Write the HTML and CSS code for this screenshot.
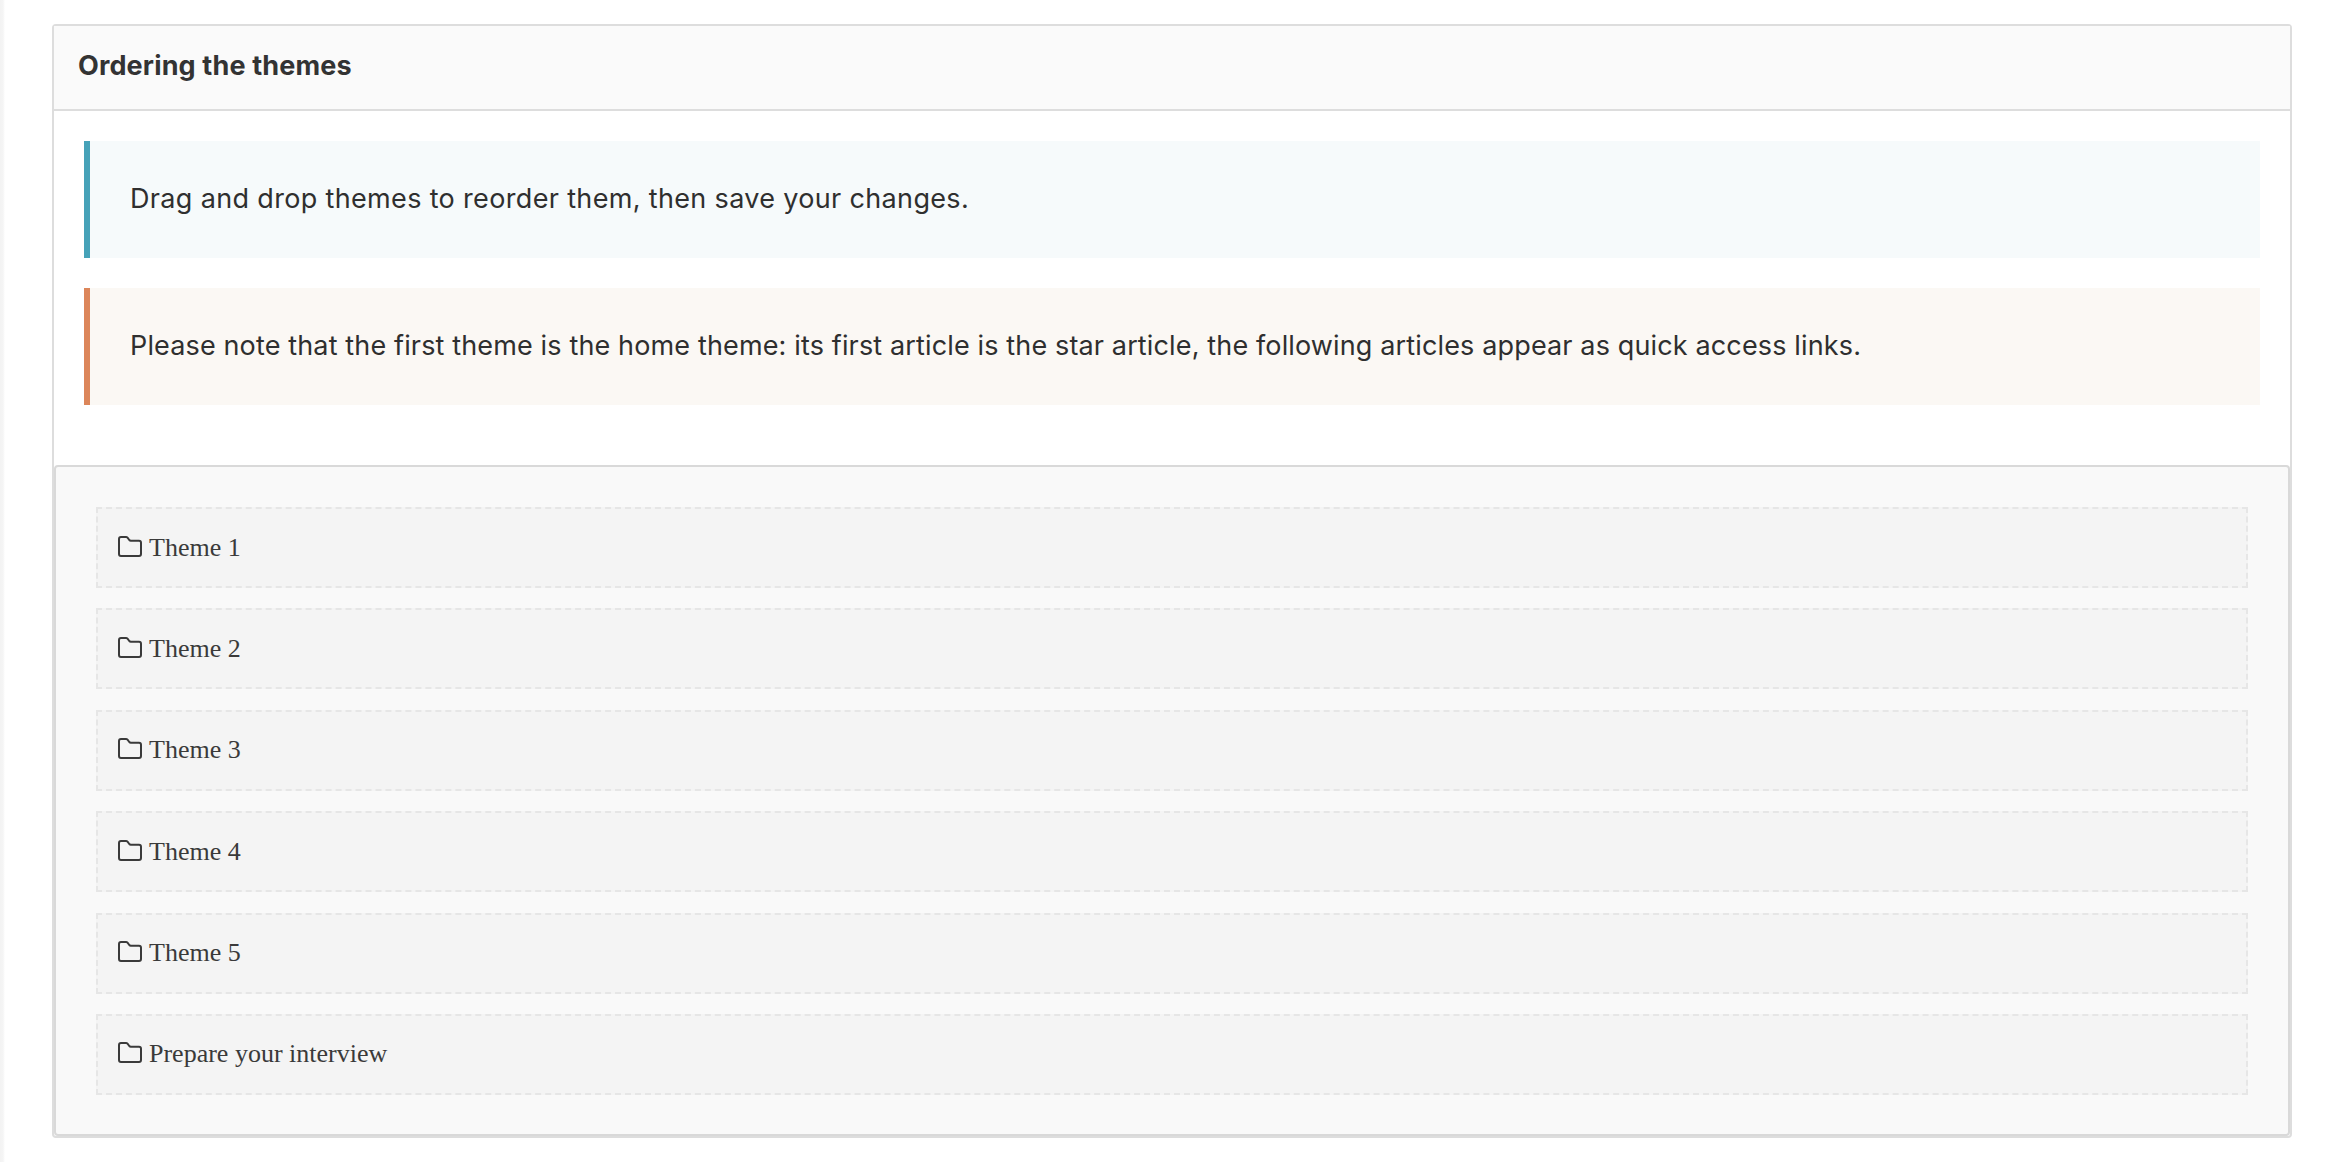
FILE: index.html
```html
<!DOCTYPE html>
<html lang="en">
<head>
<meta charset="utf-8">
<title>Ordering the themes</title>
<link rel="stylesheet" href="styles.css">
</head>
<body>
<svg width="0" height="0" class="defs" aria-hidden="true"><symbol id="folder" viewBox="0 0 24 21"><path d="M1 3a2 2 0 0 1 2-2h5a2 2 0 0 1 1.5.7l1.8 2.3a2 2 0 0 0 1.5.7H21a2 2 0 0 1 2 2V18a2 2 0 0 1-2 2H3a2 2 0 0 1-2-2Z" fill="none" stroke="currentColor" stroke-width="2" stroke-linejoin="round"/></symbol></svg>
<div class="rail"></div>
<main class="main">
  <section class="card">
    <header class="card-head"><h1 class="title">Ordering the themes</h1></header>
    <div class="notes">
      <p class="note note-info">Drag and drop themes to reorder them, then save your changes.</p>
      <p class="note note-warn">Please note that the first theme is the home theme: its first article is the star article, the following articles appear as quick access links.</p>
    </div>
    <ul class="well">
      <li class="item"><svg class="ico"><use href="#folder"/></svg><span>Theme 1</span></li>
      <li class="item"><svg class="ico"><use href="#folder"/></svg><span>Theme 2</span></li>
      <li class="item"><svg class="ico"><use href="#folder"/></svg><span>Theme 3</span></li>
      <li class="item"><svg class="ico"><use href="#folder"/></svg><span>Theme 4</span></li>
      <li class="item"><svg class="ico"><use href="#folder"/></svg><span>Theme 5</span></li>
      <li class="item"><svg class="ico"><use href="#folder"/></svg><span>Prepare your interview</span></li>
    </ul>
  </section>
</main>
</body>
</html>
```
FILE: styles.css
```css
* { box-sizing: border-box; }
html, body { margin: 0; height: 1162px; overflow: hidden; background: #fff; }
body { display: flex; font-family: "Inter", "Liberation Sans", sans-serif; color: #333; }
.defs { position: absolute; }
.rail { width: 5px; flex: none; background: linear-gradient(90deg, #f3f3f3 0, #f5f5f5 60%, #fff 100%); }
.main { flex: none; padding: 24px 0 0 47px; }
.card { width: 2240px; border: 2px solid #ddd; border-radius: 4px; background: #fff; }
.card-head { height: 85px; display: flex; align-items: center; padding: 0 24px 4px; background: #fafafa; border-bottom: 2px solid #ddd; }
.title { margin: 0; font-size: 27px; font-weight: 700; color: #333; letter-spacing: 0.15px; }
.notes { display: flex; flex-direction: column; gap: 30px; padding: 30px 30px 60px 30px; }
.note { margin: 0; height: 117px; display: flex; align-items: center; padding: 0 0 2px 40px; border-left: 6px solid; font-size: 27px; color: #2f2f2f; }
.note-info { background: #f6fafb; border-color: #46a2b8; letter-spacing: 0.34px; }
.note-warn { background: #fbf8f4; border-color: #dc865a; letter-spacing: 0.14px; }
.well { list-style: none; margin: 0; padding: 40px 40px 39px; display: flex; flex-direction: column; gap: 20.4px; background: #f9f9f9; border: 2px solid #d9d9d9; border-radius: 4px; }
.item { height: 81px; display: flex; align-items: center; gap: 7px; padding-left: 20px; background: #f4f4f4; border: 2px dashed #e6e6e6; font-family: "Liberation Serif", serif; font-size: 26px; color: #3a3a3a; }
.ico { width: 24px; height: 21px; flex: none; margin-top: -3px; color: #3a3a3a; }
```
